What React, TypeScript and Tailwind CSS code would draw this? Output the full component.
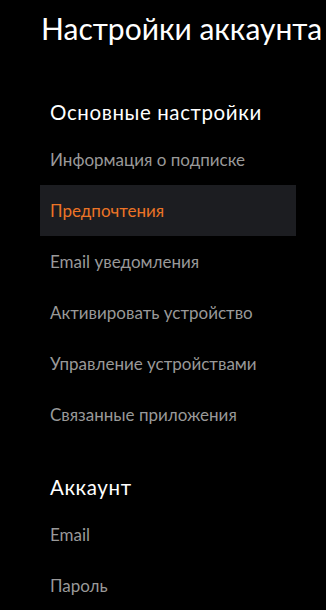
const sections = [
  {
    title: 'Основные настройки',
    items: [
      'Информация о подписке',
      'Предпочтения',
      'Email уведомления',
      'Активировать устройство',
      'Управление устройствами',
      'Связанные приложения',
    ],
  },
  {
    title: 'Аккаунт',
    items: ['Email', 'Пароль'],
  },
]

const active = 'Предпочтения'

export default function App() {
  return (
    <div className="h-[610px] w-full overflow-hidden bg-black font-['Lato','Liberation_Sans',sans-serif]">
      <h1 className="whitespace-nowrap pl-[41px] pt-[10px] text-[30px] font-normal leading-[36px] text-white">
        Настройки аккаунта
      </h1>

      <nav className="ml-[40px] w-[256px]">
        {sections.map((section, i) => (
          <div key={section.title} className={i === 0 ? 'mt-[54px]' : 'mt-[35px]'}>
            <h2 className="pb-[10px] pl-[10px] text-[20.5px] font-normal leading-[24px] tracking-[0.6px] text-white">
              {section.title}
            </h2>
            <ul>
              {section.items.map((item) => (
                <li
                  key={item}
                  className={
                    item === active
                      ? 'flex h-[51px] items-center bg-[#1c1d21] pl-[10px] text-[17px] text-[#ec7426]'
                      : 'flex h-[51px] items-center pl-[10px] text-[17px] text-[#999999]'
                  }
                >
                  {item}
                </li>
              ))}
            </ul>
          </div>
        ))}
      </nav>
    </div>
  )
}
